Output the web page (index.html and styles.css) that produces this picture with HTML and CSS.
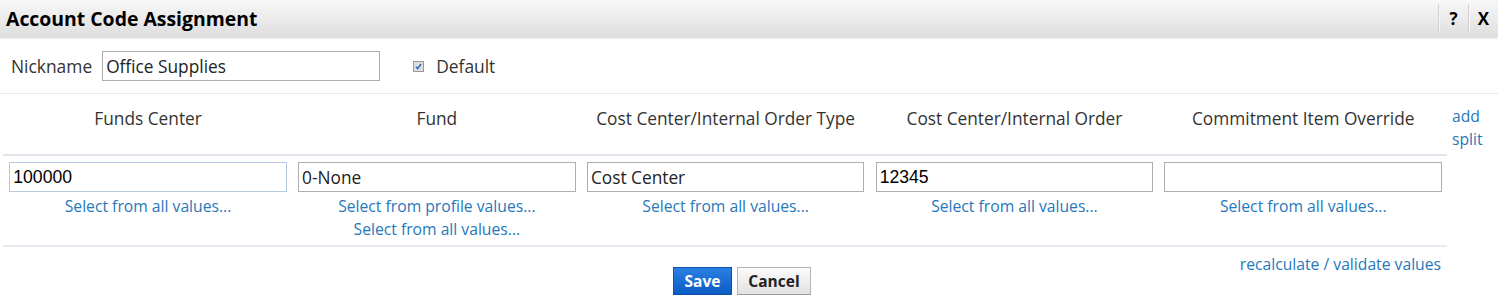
FILE: index.html
```html
<!DOCTYPE html>
<html lang="en">
<head>
<meta charset="utf-8">
<title>Account Code Assignment</title>
<link rel="stylesheet" href="styles.css">
</head>
<body>
<div class="dialog">
  <div class="titlebar">
    <h1 class="title">Account Code Assignment</h1>
    <div class="title-tools">
      <span class="tool">?</span>
      <span class="tool">X</span>
    </div>
  </div>

  <div class="nick-row">
    <label class="nick-label">Nickname</label>
    <input class="field nick-input" type="text" value="Office Supplies">
    <span class="check">
      <svg width="11" height="11" viewBox="0 0 11 11"><rect x="0.5" y="0.5" width="10" height="10" fill="#dedede" stroke="#9a9a9a"/><path d="M3 5.6 L4.6 7.6 L8 3" fill="none" stroke="#2a5fb0" stroke-width="1.4"/></svg>
    </span>
    <span class="check-label">Default</span>
  </div>

  <div class="split-area">
    <div class="splits">
      <div class="head">Funds Center</div>
      <div class="head">Fund</div>
      <div class="head">Cost Center/Internal Order Type</div>
      <div class="head">Cost Center/Internal Order</div>
      <div class="head">Commitment Item Override</div>

      <div class="cell">
        <input class="field focused num" type="text" value="100000">
        <a class="link">Select from all values...</a>
      </div>
      <div class="cell">
        <input class="field" type="text" value="0-None">
        <a class="link">Select from profile values...</a>
        <a class="link">Select from all values...</a>
      </div>
      <div class="cell">
        <input class="field" type="text" value="Cost Center">
        <a class="link">Select from all values...</a>
      </div>
      <div class="cell">
        <input class="field num" type="text" value="12345">
        <a class="link">Select from all values...</a>
      </div>
      <div class="cell">
        <input class="field" type="text" value="">
        <a class="link">Select from all values...</a>
      </div>
    </div>
    <div class="add-split"><a class="link">add<br>split</a></div>
  </div>

  <div class="footer">
    <div class="buttons">
      <button class="btn btn-primary">Save</button>
      <button class="btn btn-default">Cancel</button>
    </div>
    <a class="link recalc">recalculate / validate values</a>
  </div>
</div>
</body>
</html>
```
FILE: styles.css
```css
html, body {
  margin: 0;
  padding: 0;
  background: #ffffff;
}

body {
  font-family: "Open Sans", "Noto Sans", sans-serif;
  color: #333333;
  width: 1498px;
  height: 305px;
  overflow: hidden;
}

.dialog {
  display: flex;
  flex-direction: column;
}

/* Title bar */
.titlebar {
  height: 37px;
  display: flex;
  align-items: center;
  justify-content: space-between;
  background: linear-gradient(#f8f8f8, #dedede);
  box-shadow: 0 1px 2px rgba(0, 0, 0, 0.18);
}

.title {
  margin: 0 0 0 6px;
  font-size: 19.4px;
  font-weight: 700;
  color: #000000;
  line-height: 24px;
}

.title-tools {
  display: flex;
  align-self: stretch;
  align-items: stretch;
  padding: 4px 0 4px;
}

.tool {
  width: 29px;
  display: flex;
  align-items: center;
  justify-content: center;
  border-left: 1px solid #d2d2d2;
  box-shadow: inset 1px 0 0 #f4f4f4;
  font-size: 17px;
  font-weight: 700;
  color: #000000;
  font-family: "Open Sans", sans-serif;
}

/* Nickname row */
.nick-row {
  height: 57px;
  box-sizing: border-box;
  display: flex;
  align-items: center;
  border-bottom: 1px solid #e8e8e8;
  padding: 2px 0 0 11px;
}

.nick-label {
  font-size: 17.4px;
  color: #333333;
  margin-right: 10px;
}

.field {
  box-sizing: border-box;
  height: 30px;
  border: 1px solid #adadad;
  padding: 0 3px;
  margin: 0;
  font-family: "Open Sans", sans-serif;
  font-size: 17.3px;
  color: #222222;
  background: #ffffff;
  outline: none;
}

.nick-input {
  width: 278px;
  margin-right: 33px;
}

.check {
  display: flex;
  width: 11px;
  height: 11px;
  margin-right: 12px;
}

.check-label {
  font-size: 17.4px;
  color: #333333;
}

/* Split grid */
.split-area {
  display: flex;
}

.splits {
  margin-left: 3px;
  width: 1444px;
  display: grid;
  grid-template-columns: repeat(5, 1fr);
  grid-template-rows: 62px auto;
}

.head {
  padding: 13px 5px 0 6.3px;
  line-height: 24px;
  font-size: 17.3px;
  color: #333333;
  text-align: center;
  border-bottom: 2px solid #e1e5ec;
}

.cell {
  display: flex;
  flex-direction: column;
  align-items: center;
  padding: 6px 5px 5px 6.3px;
  border-bottom: 2px solid #e6e9ef;
}

.cell .field {
  width: 100%;
  margin-bottom: 3px;
}

.cell .focused {
  border-color: #b6c9e2;
}

.cell .num {
  font-family: "Liberation Sans", Arial, sans-serif;
  font-size: 17.6px;
  color: #000000;
}

.link {
  color: #2677bc;
  text-decoration: none;
  font-size: 15.7px;
  line-height: 22.5px;
  cursor: pointer;
}

.add-split {
  padding: 11px 0 0 5px;
}

.add-split .link {
  line-height: 23px;
  display: block;
}

/* Footer */
.footer {
  display: flex;
  justify-content: space-between;
  align-items: flex-start;
  width: 1441px;
}

.buttons {
  display: flex;
  gap: 5px;
  margin: 20px 0 0 673px;
}

.btn {
  box-sizing: border-box;
  height: 28px;
  padding: 0;
  font-family: "Open Sans", sans-serif;
  font-size: 15.5px;
  font-weight: 700;
  line-height: 26px;
  cursor: pointer;
}

.btn-primary {
  width: 59px;
  color: #ffffff;
  background: linear-gradient(#2a7fe0, #0b5cc4);
  border: 1px solid #0a52ad;
}

.btn-default {
  width: 74px;
  color: #222222;
  background: linear-gradient(#fbfbfb, #e2e2e2);
  border: 1px solid #b4b4b4;
  border-bottom-color: #9a9a9a;
}

.recalc {
  margin-top: 6px;
  font-size: 15.7px;
}
```
